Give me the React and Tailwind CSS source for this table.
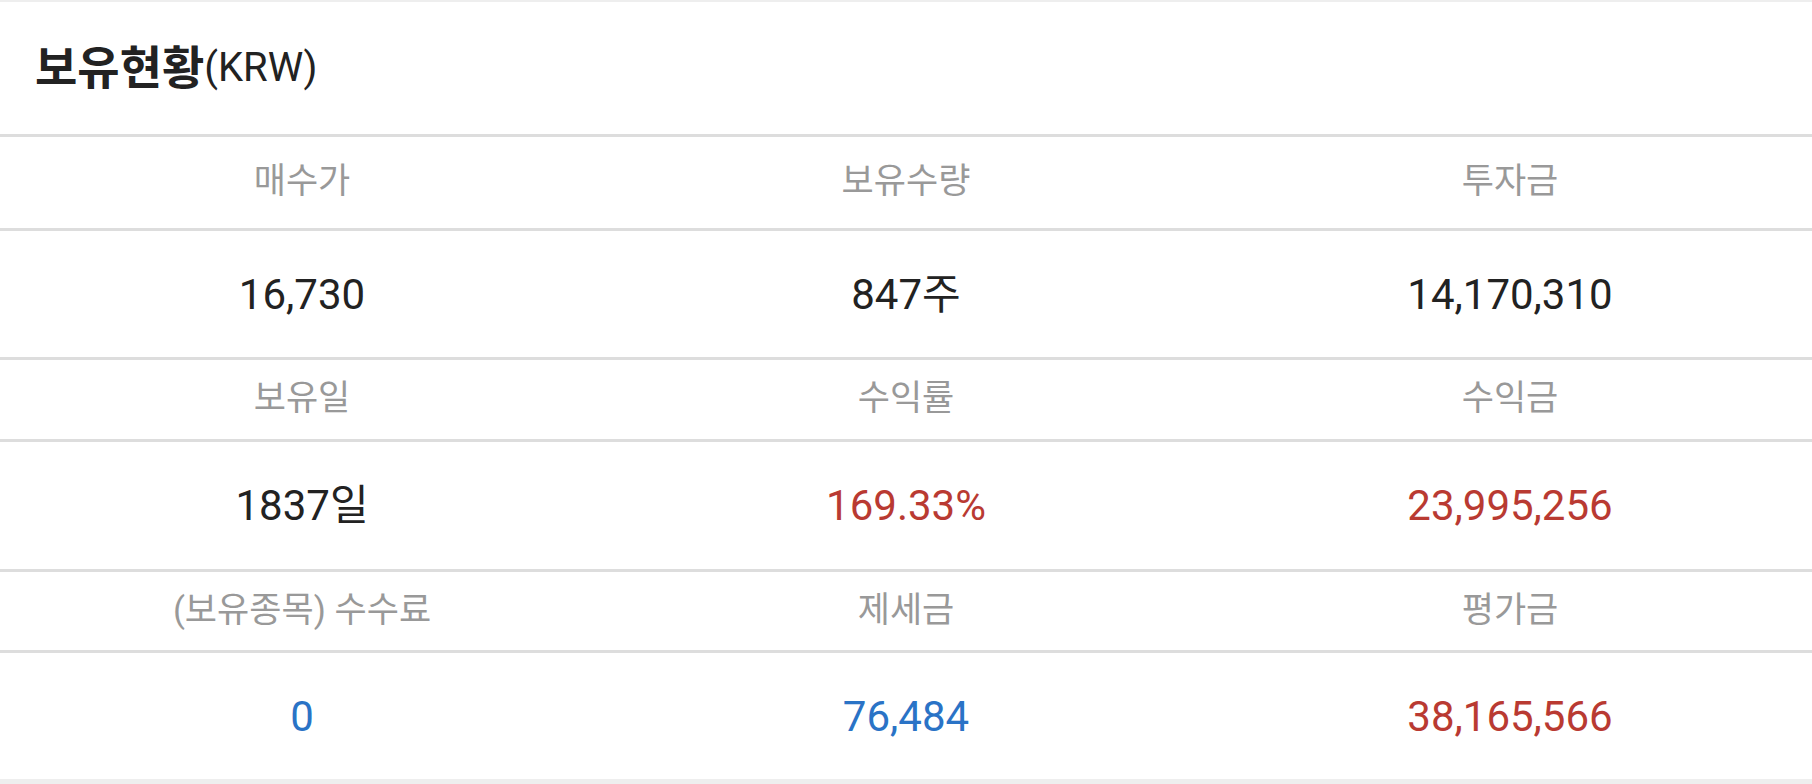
import React from "react";

const rows = [
    {
        labels: ["매수가", "보유수량", "투자금"],
        values: [
            { text: "16,730", color: "text-[#222222]" },
            { text: "847주", color: "text-[#222222]" },
            { text: "14,170,310", color: "text-[#222222]" },
        ],
        labelHeight: "h-[91px]",
        valueHeight: "h-[126px]",
    },
    {
        labels: ["보유일", "수익률", "수익금"],
        values: [
            { text: "1837일", color: "text-[#222222]" },
            { text: "169.33%", color: "text-[#b93a32]" },
            { text: "23,995,256", color: "text-[#b93a32]" },
        ],
        labelHeight: "h-[79px]",
        valueHeight: "h-[127px]",
    },
    {
        labels: ["(보유종목) 수수료", "제세금", "평가금"],
        values: [
            { text: "0", color: "text-[#2a73c6]" },
            { text: "76,484", color: "text-[#2a73c6]" },
            { text: "38,165,566", color: "text-[#b93a32]" },
        ],
        labelHeight: "h-[78px]",
        valueHeight: "h-[126px]",
    },
];

function Divider() {
    return <div className="h-[3px] bg-[#dddddd]" />;
}

export default function App() {
    return (
        <div
            className="min-h-screen bg-[#eeeeee] pt-[2px]"
            style={{ fontFamily: 'Roboto, "Noto Sans CJK KR", sans-serif' }}
        >
            <div className="bg-white">
                {/* Header */}
                <div className="h-[132px] flex items-center pl-[35px] text-[#222222]">
                    <span className="font-bold text-[46px]">보유현황</span>
                    <span className="text-[40px]">(KRW)</span>
                </div>

                {rows.map((row, i) => (
                    <div key={i}>
                        <Divider />
                        <div className={`grid grid-cols-3 ${row.labelHeight}`}>
                            {row.labels.map((label) => (
                                <div
                                    key={label}
                                    className="flex items-center justify-center text-[35px] text-[#999999]"
                                >
                                    {label}
                                </div>
                            ))}
                        </div>
                        <Divider />
                        <div className={`grid grid-cols-3 ${row.valueHeight}`}>
                            {row.values.map((v) => (
                                <div
                                    key={v.text}
                                    className={`flex items-center justify-center text-[42px] ${v.color}`}
                                >
                                    {v.text}
                                </div>
                            ))}
                        </div>
                    </div>
                ))}
            </div>
        </div>
    );
}
